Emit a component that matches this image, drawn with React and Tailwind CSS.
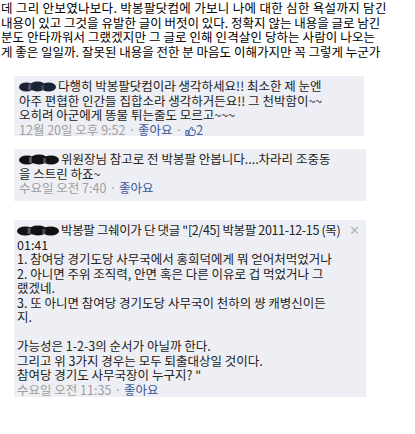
import React from "react";

const KR = { fontFamily: '"Noto Sans CJK KR", "Noto Sans", sans-serif' };

function Blob({ w = 40, color = "#111" }) {
  return (
    <svg width={w} height="11" viewBox="0 0 40 11" preserveAspectRatio="none" className="inline-block align-[-1px] mr-[2px]">
      <ellipse cx="8" cy="6" rx="8" ry="4.5" fill={color} />
      <ellipse cx="20" cy="5.5" rx="9" ry="5" fill={color} />
      <ellipse cx="32" cy="6" rx="8" ry="4.5" fill={color} />
      <rect x="10" y="3" width="3" height="6" fill="#556" />
      <rect x="24" y="4" width="3" height="5" fill="#445" />
    </svg>
  );
}

function Meta({ time, likes }) {
  return (
    <div className="text-[#a0a0a0]">
      {time} · <span className="text-[#3b5998]">좋아요</span>
      {likes && (
        <>
          {" "}·{" "}
          <span className="text-[#3b5998]">
            <svg width="11" height="10" viewBox="0 0 12 11" className="inline-block align-[-1px]">
              <path d="M1 5h2.5v5.5H1z M4.5 5.2 7 1.2c.9 0 1.3.6 1.1 1.5L7.6 4.5H10.5c.7 0 1.2.6 1 1.3l-1 3.8c-.2.6-.6.9-1.2.9H4.5z" fill="none" stroke="#3b5998" strokeWidth="1.1" />
            </svg>
            2
          </span>
        </>
      )}
    </div>
  );
}

export default function App() {
  return (
    <div className="w-[415px] h-[434px] bg-white overflow-hidden" style={KR}>
      <div className="pt-[1px] pl-[1px] text-[12.5px] leading-[14.6px] text-black whitespace-nowrap">
        <div className="tracking-[0.3px]">데 그리 안보였나보다. 박봉팔닷컴에 가보니 나에 대한 심한 욕설까지 담긴</div>
        <div>내용이 있고 그것을 유발한 글이 버젓이 있다. 정확지 않는 내용을 글로 남긴</div>
        <div className="tracking-[0.1px]">분도 안타까워서 그랬겠지만 그 글로 인해 인격살인 당하는 사람이 나오는</div>
        <div>게 좋은 일일까. 잘못된 내용을 전한 분 마음도 이해가지만 꼭 그렇게 누군가</div>
      </div>

      <div className="ml-[14px] mt-[17px] flex flex-col text-[12.5px] leading-[14.5px] text-[#222] whitespace-nowrap">
        <div className="w-[350px] bg-[#edeff4] pl-[5px] pt-[3px] pb-[1px] h-[60px]">
          <div>
            <Blob w={37} color="#1a2336" />
            다행히 박봉팔닷컴이라 생각하세요!! 최소한 제 눈엔
          </div>
          <div>아주 편협한 인간들 집합소라 생각하거든요!! 그 천박함이~~</div>
          <div>오히려 아군에게 똥물 튀는줄도 모르고~~~</div>
          <Meta time="12월 20일 오후 9:52" likes />
        </div>

        <div className="mt-[13px] w-[352px] bg-[#edeff4] pl-[5px] pt-[3px] h-[52px]">
          <div>
            <Blob w={40} />
            위원장님 참고로 전 박봉팔 안봅니다....차라리 조중동
          </div>
          <div>을 스트린 하죠~</div>
          <Meta time="수요일 오전 7:40" />
        </div>

        <div className="mt-[19px] w-[352px] bg-[#edeff4] pl-[3px] pr-[6px] pt-[3px] h-[177px]">
          <div className="flex justify-between">
            <div className="tracking-[-0.35px]">
              <Blob w={42} />
              박봉팔 그쉐이가 단 댓글 "[2/45] 박봉팔 2011-12-15 (목)
            </div>
            <span className="text-[#b0b4bd] text-[13px]">✕</span>
          </div>
          <div>01:41</div>
          <div>1. 참여당 경기도당 사무국에서 홍희덕에게 뭐 얻어처먹었거나</div>
          <div>2. 아니면 주위 조직력, 안면 혹은 다른 이유로 겁 먹었거나 그</div>
          <div>랬겠네.</div>
          <div>3. 또 아니면 참여당 경기도당 사무국이 천하의 썅 캐병신이든</div>
          <div>지.</div>
          <div>&nbsp;</div>
          <div>가능성은 1-2-3의 순서가 아닐까 한다.</div>
          <div>그리고 위 3가지 경우는 모두 퇴출대상일 것이다.</div>
          <div>참여당 경기도 사무국장이 누구지? "</div>
          <Meta time="수요일 오전 11:35" />
        </div>
      </div>
    </div>
  );
}
